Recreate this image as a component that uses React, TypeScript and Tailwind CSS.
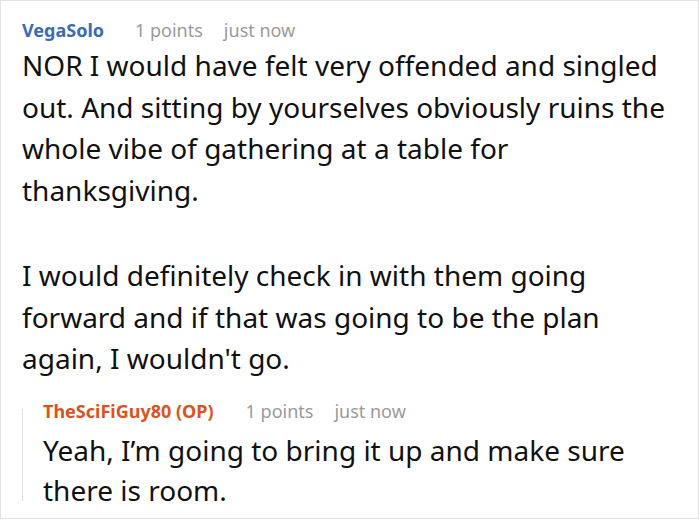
export default function App() {
  return (
    <div
      className="w-[699px] h-[519px] bg-white border border-[#e3e3e3] overflow-hidden"
      style={{ fontFamily: '"Noto Sans", "Open Sans", sans-serif' }}
    >
      <div className="pl-[21px] pr-4 pt-[17px]">
        <div className="flex items-center text-[18px] leading-[24px]">
          <span className="font-bold text-[#3a6cb5]">VegaSolo</span>
          <span className="text-[#9a9a9a] ml-[31px]">1 points</span>
          <span className="text-[#9a9a9a] ml-[21px]">just now</span>
        </div>
        <div className="mt-[3px] text-[28px] leading-[41.5px] text-[#111]">
          <p>
            NOR I would have felt very offended and singled out. And sitting by yourselves obviously ruins the whole
            vibe of gathering at a table for thanksgiving.
          </p>
          <p className="mt-[44px]">
            I would definitely check in with them going forward and if that was going to be the plan again, I
            wouldn't go.
          </p>
        </div>
        <div className="mt-[19px] flex items-start">
          <div className="w-px h-[92px] bg-[#dddddd] mt-[10px] shrink-0" />
          <div className="pl-[20px]">
            <div className="flex items-center text-[18px] leading-[24px]">
              <span className="font-bold text-[#d9541e]">TheSciFiGuy80 (OP)</span>
              <span className="text-[#9a9a9a] ml-[32px]">1 points</span>
              <span className="text-[#9a9a9a] ml-[21px]">just now</span>
            </div>
            <p className="mt-[7px] text-[28px] leading-[40px] text-[#111]">
              Yeah, I’m going to bring it up and make sure there is room.
            </p>
          </div>
        </div>
      </div>
    </div>
  )
}
